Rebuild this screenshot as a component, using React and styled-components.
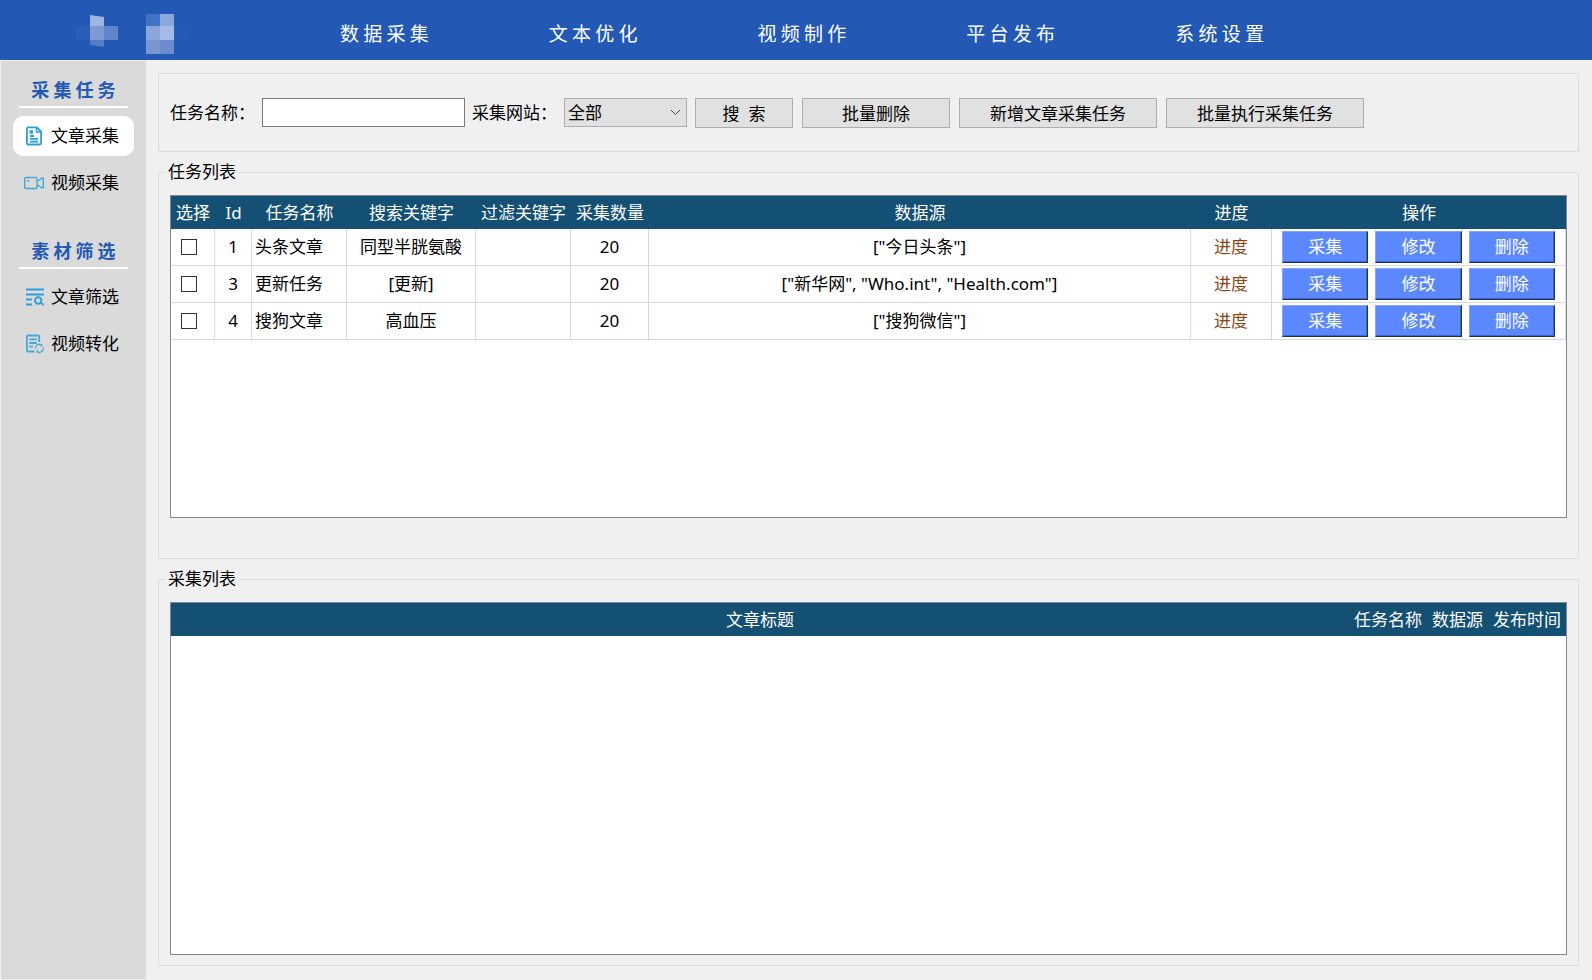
import React, { useState } from 'react';
import styled, { createGlobalStyle } from 'styled-components';

const GlobalStyle = createGlobalStyle`
    *, *::before, *::after {
        box-sizing: border-box;
    }

    body {
        margin: 0;
        background: #f0f0f0;
        color: #000;
        font-family: 'Noto Sans', 'Noto Sans CJK SC', sans-serif;
        font-size: 17px;
        line-height: 24px;
    }

    button, input, select {
        font: inherit;
        color: inherit;
    }
`;

const Page = styled.div`
    min-height: 100vh;
    display: flex;
    flex-direction: column;
`;

const Header = styled.header`
    height: 60px;
    flex: none;
    display: flex;
    align-items: center;
    background: #2359b5;
`;

const Brand = styled.div`
    width: 340px;
    height: 60px;
    flex: none;
`;

const Nav = styled.nav`
    display: flex;
    gap: 120px;
    padding-top: 6px;
`;

const NavLink = styled.a`
    color: #fff;
    font-family: 'Noto Sans CJK SC', sans-serif;
    font-size: 19px;
    text-decoration: none;
    white-space: nowrap;
`;

const Body = styled.div`
    flex: 1;
    display: flex;
`;

const Sidebar = styled.aside`
    width: 145px;
    flex: none;
    margin: 1px 0 1px 1px;
    padding-left: 12px;
    background: #dadada;
`;

const MenuSection = styled.section`
    display: flex;
    flex-direction: column;
    align-items: flex-start;
    gap: 7px;
    margin-bottom: 19px;
`;

const MenuTitle = styled.h2`
    width: 109px;
    height: 47px;
    margin: 0 0 1px 6px;
    padding-top: 16px;
    border-bottom: 2px solid #fff;
    color: #2359b5;
    font-family: 'Noto Sans CJK SC', sans-serif;
    font-size: 18px;
    font-weight: 700;
    text-align: center;
    white-space: nowrap;
`;

const MenuItem = styled.button`
    width: 121px;
    height: 40px;
    display: flex;
    align-items: center;
    gap: 7px;
    padding: 0 0 0 11px;
    border: 0;
    border-radius: 10px;
    background: ${({ $active }) => ($active ? '#fff' : 'transparent')};
    white-space: nowrap;
    cursor: pointer;

    svg {
        flex: none;
    }
`;

const Main = styled.main`
    flex: 1;
    min-width: 0;
    display: flex;
    flex-direction: column;
    gap: 8px;
    padding: 13px 13px 14px 12px;
`;

const SearchBar = styled.form`
    height: 79px;
    display: flex;
    align-items: flex-start;
    gap: 8px;
    padding: 24px 11px 0;
    border: 1px solid #dcdcdc;
`;

const Field = styled.div`
    display: flex;
    align-items: center;
    gap: 7px;
    white-space: nowrap;
`;

const TextInput = styled.input`
    width: 203px;
    height: 29px;
    padding: 0 4px;
    border: 1px solid #7a7a7a;
    border-radius: 0;
    background: #fff;
`;

const SelectBox = styled.div`
    position: relative;

    svg {
        position: absolute;
        right: 6px;
        top: 11px;
        pointer-events: none;
    }
`;

const Select = styled.select`
    width: 123px;
    height: 29px;
    display: block;
    padding: 0 20px 0 3px;
    appearance: none;
    border: 1px solid #adadad;
    border-radius: 0;
    background: #e1e1e1;
`;

const Tools = styled.div`
    display: flex;
    gap: 9px;
`;

const ToolButton = styled.button`
    width: ${({ $width }) => $width}px;
    height: 30px;
    padding: 2px 0 0;
    border: 1px solid #adadad;
    background: #e1e1e1;
    white-space: pre;
    cursor: pointer;
`;

const Group = styled.fieldset`
    min-width: 0;
    display: flex;
    flex-direction: column;
    flex: ${({ $grow }) => ($grow ? 1 : 'none')};
    margin: 0;
    padding: 11px 7px ${({ $bottom }) => $bottom}px;
    border: 1px solid #dcdcdc;
`;

const Legend = styled.legend`
    padding: 0 3px 0 2px;
`;

const TableFrame = styled.div`
    min-height: ${({ $minHeight }) => $minHeight}px;
    flex: 1;
    margin: 0 4px;
    border: 1px solid #828790;
    background: #fff;
`;

const Table = styled.table`
    width: 100%;
    table-layout: fixed;
    border-collapse: separate;
    border-spacing: 0;
`;

const HeadCell = styled.th`
    width: ${({ $width }) => ($width ? `${$width}px` : 'auto')};
    height: 33px;
    padding: 0;
    background: #145074;
    color: #fff;
    font-weight: 400;
    text-align: center;
    white-space: nowrap;
`;

const Cell = styled.td`
    height: 37px;
    padding: ${({ $left }) => `0 0 0 ${$left || 0}px`};
    border-right: 1px solid #d8d8d8;
    border-bottom: 1px solid #d8d8d8;
    color: ${({ $color }) => $color || 'inherit'};
    text-align: ${({ $left }) => ($left ? 'left' : 'center')};
    white-space: nowrap;
`;

const Checkbox = styled.input`
    width: 16px;
    height: 16px;
    display: block;
    margin: 0;
    appearance: none;
    border: 1px solid #333;
    background: #fff;

    &:checked {
        background: #333;
        box-shadow: inset 0 0 0 3px #fff;
    }
`;

const Actions = styled.div`
    display: flex;
    gap: 7px;
    padding: 0 10px;
`;

const ActionButton = styled.button`
    flex: 1;
    height: 32px;
    padding: 0;
    border: 1px solid;
    border-color: #83a5ff #1f3163 #1f3163 #83a5ff;
    box-shadow: inset -1px -1px 0 #4065c8;
    background: #5b88ff;
    color: #fff;
    cursor: pointer;
`;

const LogoMosaic = () => (
    <svg width="200" height="60" viewBox="0 0 200 60" aria-hidden="true">
        <rect x="76" y="26" width="14" height="14" fill="#2a5eb7" />
        <path d="M90 15l14 2v9H90z" fill="#9fb4e0" />
        <rect x="90" y="26" width="14" height="14" fill="#7d9ad2" />
        <rect x="104" y="26" width="14" height="14" fill="#5f84c9" />
        <path d="M90 40h14v7l-14-2z" fill="#567dc6" />
        <rect x="146" y="14" width="14" height="12" fill="#4473c3" />
        <rect x="160" y="14" width="14" height="12" fill="#8aa8db" />
        <rect x="146" y="26" width="14" height="14" fill="#8ca6d9" />
        <rect x="160" y="26" width="14" height="14" fill="#a3bbe6" />
        <rect x="146" y="40" width="14" height="14" fill="#7996d1" />
        <rect x="160" y="40" width="14" height="14" fill="#6a8bcd" />
        <rect x="174" y="26" width="14" height="14" fill="#255bb6" />
    </svg>
);

const ArticleIcon = () => (
    <svg width="20" height="20" viewBox="0 0 20 20" fill="none" stroke="#2a9fdc" strokeWidth="1.8">
        <path d="M4.400 1.400h8.600l4.100 4.100v11.500a1.500 1.500 0 0 1-1.500 1.500H4.400a1.500 1.500 0 0 1-1.500-1.500V2.900a1.500 1.500 0 0 1 1.500-1.500z" />
        <path d="M12.500 1.500v4.500h4.500" strokeWidth="1.500" />
        <rect x="5.500" y="4.300" width="3.600" height="3.400" rx="1" fill="#2a9fdc" stroke="none" />
        <path d="M6 10h4M6 12.800h8M6 15.600h8" />
    </svg>
);

const VideoIcon = () => (
    <svg width="20" height="20" viewBox="0 0 20 20" fill="none" stroke="#45a8dc" strokeWidth="1.4">
        <rect x="0.700" y="4.500" width="12.300" height="11" rx="1.300" />
        <path d="M13.500 8.300l4-3h1.800v9.400h-1.800l-4-3" />
        <circle cx="4.300" cy="7.800" r="1.100" fill="#45a8dc" stroke="none" />
    </svg>
);

const FilterIcon = () => (
    <svg width="20" height="20" viewBox="0 0 20 20" fill="none" stroke="#2f9fd9" strokeWidth="2">
        <path d="M2 2.500h18M2 7.500h18M2 12.500h6M2 17.500h6" />
        <circle cx="14.200" cy="13.500" r="3.200" />
        <path d="M16.600 15.500l3 2.600" />
    </svg>
);

const ConvertIcon = () => (
    <svg width="20" height="20" viewBox="0 0 20 20" fill="none" stroke="#45a8dc" strokeWidth="1.8">
        <path d="M15.200 8V2.500a1 1 0 0 0-1-1H3.900a1 1 0 0 0-1 1v14a1 1 0 0 0 1 1h6.500" />
        <path d="M5.300 5.300h7.500M5.300 9h7.500M5.300 12.700h3.700" />
        <path d="M11.500 14.500a4 4 0 0 1 6-3.800M15.500 10.300l2.400.5-.6 2.200" strokeWidth="1.2" />
        <path d="M19.300 13.500a4 4 0 0 1-6 4.200M15.400 18.600l-2.400-.6.600-2.200" strokeWidth="1.2" />
    </svg>
);

const ChevronDown = () => (
    <svg width="11" height="8" viewBox="0 0 11 8" fill="none" stroke="#444" aria-hidden="true">
        <path d="M1 1l4.500 4.500L10 1" />
    </svg>
);

const NAV = ['数 据 采 集', '文 本 优 化', '视 频 制 作', '平 台 发 布', '系 统 设 置'];

const MENU = [
    {
        title: '采 集 任 务',
        items: [
            { name: '文章采集', Icon: ArticleIcon },
            { name: '视频采集', Icon: VideoIcon },
        ],
    },
    {
        title: '素 材 筛 选',
        items: [
            { name: '文章筛选', Icon: FilterIcon },
            { name: '视频转化', Icon: ConvertIcon },
        ],
    },
];

const TOOLS = [
    { label: '搜  索', width: 98 },
    { label: '批量删除', width: 148 },
    { label: '新增文章采集任务', width: 198 },
    { label: '批量执行采集任务', width: 198 },
];

const TASK_COLUMNS = [
    { label: '选择', width: 44 },
    { label: 'Id', width: 37 },
    { label: '任务名称', width: 95 },
    { label: '搜索关键字', width: 129 },
    { label: '过滤关键字', width: 95 },
    { label: '采集数量', width: 78 },
    { label: '数据源' },
    { label: '进度', width: 81 },
    { label: '操作', width: 294 },
];

const ARTICLE_COLUMNS = [
    { label: '文章标题' },
    { label: '任务名称', width: 78 },
    { label: '数据源', width: 61 },
    { label: '发布时间', width: 78 },
];

const TASKS = [
    { id: 1, name: '头条文章', keyword: '同型半胱氨酸', filter: '', count: 20, source: '["今日头条"]' },
    { id: 3, name: '更新任务', keyword: '[更新]', filter: '', count: 20, source: '["新华网", "Who.int", "Health.com"]' },
    { id: 4, name: '搜狗文章', keyword: '高血压', filter: '', count: 20, source: '["搜狗微信"]' },
];

const TableHead = ({ columns }) => (
    <thead>
        <tr>
            {columns.map(({ label, width }) => (
                <HeadCell key={label} $width={width} scope="col">{label}</HeadCell>
            ))}
        </tr>
    </thead>
);

const TaskRow = ({ task, checked, onToggle }) => (
    <tr>
        <Cell $left={10}>
            <Checkbox
                type="checkbox"
                aria-label={task.name}
                checked={checked}
                onChange={() => onToggle(task.id)}
            />
        </Cell>
        <Cell>{task.id}</Cell>
        <Cell $left={3}>{task.name}</Cell>
        <Cell>{task.keyword}</Cell>
        <Cell>{task.filter}</Cell>
        <Cell>{task.count}</Cell>
        <Cell>{task.source}</Cell>
        <Cell $color="#8b4513">进度</Cell>
        <Cell>
            <Actions>
                <ActionButton type="button">采集</ActionButton>
                <ActionButton type="button">修改</ActionButton>
                <ActionButton type="button">删除</ActionButton>
            </Actions>
        </Cell>
    </tr>
);

const App = () => {
    const [active, setActive] = useState('文章采集');
    const [selected, setSelected] = useState([]);

    const handleToggle = (id) => {
        setSelected((prev) => (prev.includes(id) ? prev.filter((item) => item !== id) : [...prev, id]));
    };

    return (
        <Page>
            <GlobalStyle />
            <Header>
                <Brand>
                    <LogoMosaic />
                </Brand>
                <Nav>
                    {NAV.map((label) => (
                        <NavLink key={label} href="#">{label}</NavLink>
                    ))}
                </Nav>
            </Header>
            <Body>
                <Sidebar>
                    {MENU.map(({ title, items }) => (
                        <MenuSection key={title}>
                            <MenuTitle>{title}</MenuTitle>
                            {items.map(({ name, Icon }) => (
                                <MenuItem
                                    key={name}
                                    type="button"
                                    $active={active === name}
                                    onClick={() => setActive(name)}
                                >
                                    <Icon />
                                    {name}
                                </MenuItem>
                            ))}
                        </MenuSection>
                    ))}
                </Sidebar>
                <Main>
                    <SearchBar onSubmit={(e) => e.preventDefault()}>
                        <Field>
                            <label htmlFor="task-name">任务名称：</label>
                            <TextInput id="task-name" type="text" />
                            <label htmlFor="task-site">采集网站：</label>
                            <SelectBox>
                                <Select id="task-site">
                                    <option>全部</option>
                                </Select>
                                <ChevronDown />
                            </SelectBox>
                        </Field>
                        <Tools>
                            {TOOLS.map(({ label, width }) => (
                                <ToolButton key={label} type="button" $width={width}>{label}</ToolButton>
                            ))}
                        </Tools>
                    </SearchBar>
                    <Group $bottom={40}>
                        <Legend>任务列表</Legend>
                        <TableFrame $minHeight={323}>
                            <Table>
                                <TableHead columns={TASK_COLUMNS} />
                                <tbody>
                                    {TASKS.map((task) => (
                                        <TaskRow
                                            key={task.id}
                                            task={task}
                                            checked={selected.includes(task.id)}
                                            onToggle={handleToggle}
                                        />
                                    ))}
                                </tbody>
                            </Table>
                        </TableFrame>
                    </Group>
                    <Group $grow $bottom={10}>
                        <Legend>采集列表</Legend>
                        <TableFrame $minHeight={200}>
                            <Table>
                                <TableHead columns={ARTICLE_COLUMNS} />
                            </Table>
                        </TableFrame>
                    </Group>
                </Main>
            </Body>
        </Page>
    );
};

export default App;
